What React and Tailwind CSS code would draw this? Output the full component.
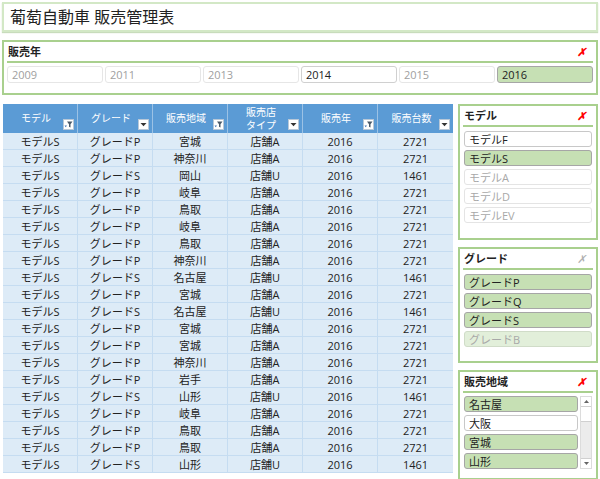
import React from 'react';

const font = { fontFamily: '"Open Sans", "Noto Sans CJK JP", sans-serif' };

const years = [
  { y: '2009', state: 'off' },
  { y: '2011', state: 'off' },
  { y: '2013', state: 'off' },
  { y: '2014', state: 'on' },
  { y: '2015', state: 'off' },
  { y: '2016', state: 'sel' },
];

const rows = [
  ['P', '宮城'], ['P', '神奈川'], ['S', '岡山'], ['P', '岐阜'], ['P', '鳥取'],
  ['P', '岐阜'], ['P', '鳥取'], ['P', '神奈川'], ['S', '名古屋'], ['P', '宮城'],
  ['S', '名古屋'], ['P', '宮城'], ['P', '宮城'], ['P', '神奈川'], ['P', '岩手'],
  ['S', '山形'], ['P', '岐阜'], ['P', '鳥取'], ['P', '鳥取'], ['S', '山形'],
];

function FilterBtn({ kind }) {
  return (
    <span className="absolute right-[3px] bottom-[3px] w-[11px] h-[11px] bg-white border border-[#b8c8d8] flex items-center justify-center">
      {kind === 'funnel' ? (
        <svg width="9" height="9" viewBox="0 0 9 9">
          <path d="M3 1.5h5.5L6.5 4.2V7.5L5 6.7V4.2z" fill="#4a5a6a" />
          <path d="M0.5 5.5h2.5L1.75 7.2z" fill="#3b72b8" />
        </svg>
      ) : (
        <svg width="7" height="5" viewBox="0 0 7 5">
          <path d="M0.5 1h6L3.5 4.2z" fill="#333" />
        </svg>
      )}
    </span>
  );
}

function SlicerItem({ label, state }) {
  const cls =
    state === 'sel'
      ? 'bg-[#c6e0b4] border-[#a6a6a6] text-[#222]'
      : state === 'on'
      ? 'bg-white border-[#c8c8c8] text-[#222]'
      : state === 'faded'
      ? 'bg-[#e2efda] border-[#d0dcc8] text-[#a8a8a8]'
      : 'bg-white border-[#e4e4e4] text-[#a8a8a8]';
  return (
    <div className={`h-[16px] border rounded-[3px] px-[4px] flex items-center text-[11px] leading-none ${cls}`}>
      {label}
    </div>
  );
}

function SlicerHead({ title, active }) {
  return (
    <div className="flex items-center justify-between h-[20px] mx-[3px] px-[1px] border-b-[2px] border-[#a9d08e]">
      <span className="text-[11px] font-bold text-[#222]">{title}</span>
      <span className={`text-[11px] italic font-bold mr-[6px] ${active ? 'text-[#ff0000]' : 'text-[#b0b0b0] font-normal'}`}>✗</span>
    </div>
  );
}

export default function App() {
  return (
    <div className="w-[600px] h-[479px] bg-white overflow-hidden" style={font}>
      {/* title */}
      <div className="mx-[2px] mt-[2px] h-[30px] border-[2px] border-[#d3e8c6] shadow-[0_1px_1px_#c8dcbc] flex items-center px-[6px] text-[16px] text-[#222]">
        葡萄自動車 販売管理表
      </div>

      {/* year slicer */}
      <div className="mx-[2px] mt-[8px] h-[55px] border-[2px] border-[#a9d08e] pt-[1px]">
        <SlicerHead title="販売年" active />
        <div className="flex gap-[2px] mx-[3px] mt-[3px]">
          {years.map((it) => (
            <div
              key={it.y}
              className={`flex-1 h-[17px] border rounded-[3px] px-[4px] flex items-center text-[11px] leading-none ${
                it.state === 'sel'
                  ? 'bg-[#c6e0b4] border-[#a6a6a6] text-[#222]'
                  : it.state === 'on'
                  ? 'bg-white border-[#d0d0d0] text-[#222]'
                  : 'bg-white border-[#e6e6e6] text-[#a0a0a0]'
              }`}
            >
              {it.y}
            </div>
          ))}
        </div>
      </div>

      <div className="flex mt-[9px] ml-[3px] gap-[5px]">
        {/* table */}
        <div className="w-[450px]">
          <div className="grid grid-cols-6 h-[29px] bg-[#5b9bd5] text-white text-[10px]">
            {[
              ['モデル', 'funnel'],
              ['グレード', 'arrow'],
              ['販売地域', 'funnel'],
              ['販売店\nタイプ', 'arrow'],
              ['販売年', 'funnel'],
              ['販売台数', 'arrow'],
            ].map(([h, k], i) => (
              <div
                key={i}
                className="relative flex items-center justify-center pr-[8px] border-r border-[#9cc2e5] last:border-r-0 whitespace-pre-line text-center leading-[13px]"
              >
                {h}
                <FilterBtn kind={k} />
              </div>
            ))}
          </div>
          {rows.map(([g, region], i) => (
            <div
              key={i}
              className="grid grid-cols-6 h-[17px] bg-[#ddebf7] border-b border-[#c5dcf1] text-[11px] text-[#222] leading-none"
            >
              <div className="flex items-center justify-center border-r border-[#c5dcf1]">モデルS</div>
              <div className="flex items-center justify-center border-r border-[#c5dcf1]">グレード{g}</div>
              <div className="flex items-center justify-center border-r border-[#c5dcf1]">{region}</div>
              <div className="flex items-center justify-center border-r border-[#c5dcf1]">店舗{g === 'S' ? 'U' : 'A'}</div>
              <div className="flex items-center justify-center border-r border-[#c5dcf1]">2016</div>
              <div className="flex items-center justify-center">{g === 'S' ? '1461' : '2721'}</div>
            </div>
          ))}
        </div>

        {/* right slicers */}
        <div className="w-[140px] flex flex-col gap-[7px]">
          <div className="h-[136px] border-[2px] border-[#a9d08e] pt-[1px]">
            <SlicerHead title="モデル" active />
            <div className="flex flex-col gap-[3px] mx-[4px] mt-[4px]">
              <SlicerItem label="モデルF" state="on" />
              <SlicerItem label="モデルS" state="sel" />
              <SlicerItem label="モデルA" state="off" />
              <SlicerItem label="モデルD" state="off" />
              <SlicerItem label="モデルEV" state="off" />
            </div>
          </div>

          <div className="h-[116px] border-[2px] border-[#a9d08e] pt-[1px]">
            <SlicerHead title="グレード" />
            <div className="flex flex-col gap-[3px] mx-[4px] mt-[4px]">
              <SlicerItem label="グレードP" state="sel" />
              <SlicerItem label="グレードQ" state="sel" />
              <SlicerItem label="グレードS" state="sel" />
              <SlicerItem label="グレードB" state="faded" />
            </div>
          </div>

          <div className="h-[110px] border-[2px] border-[#a9d08e] pt-[1px]">
            <SlicerHead title="販売地域" active />
            <div className="flex mx-[4px] mt-[3px] gap-[2px]">
              <div className="flex-1 flex flex-col gap-[3px]">
                <SlicerItem label="名古屋" state="sel" />
                <SlicerItem label="大阪" state="on" />
                <SlicerItem label="宮城" state="sel" />
                <SlicerItem label="山形" state="sel" />
              </div>
              <div className="w-[12px] h-[73px] bg-[#ececec] border border-[#dcdcdc] flex flex-col">
                <div className="h-[10px] bg-white border-b border-[#d0d0d0] flex items-center justify-center">
                  <svg width="5" height="3" viewBox="0 0 5 3"><path d="M0 3h5L2.5 0z" fill="#666" /></svg>
                </div>
                <div className="h-[15px] bg-white border-b border-[#d0d0d0]" />
                <div className="flex-1" />
                <div className="h-[10px] bg-white border-t border-[#d0d0d0] flex items-center justify-center">
                  <svg width="5" height="3" viewBox="0 0 5 3"><path d="M0 0h5L2.5 3z" fill="#666" /></svg>
                </div>
              </div>
            </div>
          </div>
        </div>
      </div>
    </div>
  );
}
